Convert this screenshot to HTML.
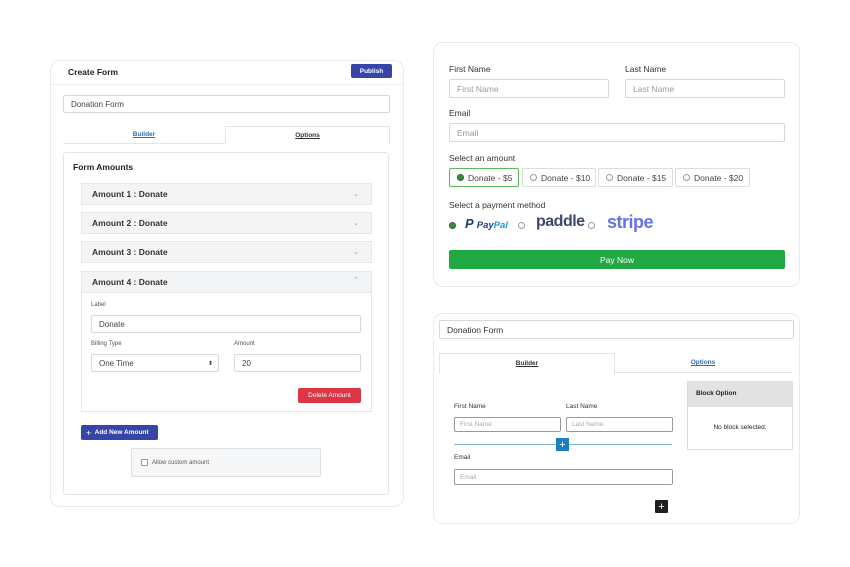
<!DOCTYPE html>
<html><head><meta charset="utf-8"><style>
*{box-sizing:border-box;margin:0;padding:0}
body{width:850px;height:567px;background:#fff;font-family:"Liberation Sans",Arial,sans-serif;position:relative;overflow:hidden;color:#222}
.a{position:absolute}
.card{position:absolute;border:1px solid #e8ecef;border-radius:10px;background:#fff}
.inp{position:absolute;border:1px solid #d6d9dc;border-radius:2px;background:#fff;font-size:8px;color:#444;padding-left:7px;display:flex;align-items:center}
.acc{position:absolute;left:81px;width:291px;height:22px;background:#f3f4f5;border:1px solid #e6e7e8;font-size:8.5px;font-weight:bold;color:#333;padding-left:10px;display:flex;align-items:center}
.acc span{position:absolute;right:12px;color:#8aa4c0;font-size:7px;font-weight:normal}
.sm{font-size:6px;color:#555}
.lbl{position:absolute;font-size:8.5px;color:#333}
.amt{position:absolute;top:168px;height:19px;border:1px solid #ddd;border-radius:2px;font-size:8.5px;color:#444;display:flex;align-items:center;padding-left:7px;gap:4px}
.rd{width:7px;height:7px;border:1px solid #999;border-radius:50%;display:inline-block}
.rdon{background:#3a8a3a;border-color:#2a6a2a}
.bi{position:absolute;border:1px solid #999;border-radius:2px;font-size:6.5px;color:#aaa;padding-left:5px;display:flex;align-items:center}
.btn{display:flex;align-items:center;justify-content:center}
</style></head><body>

<!-- Left card -->
<div class="card" style="left:50px;top:60px;width:354px;height:447px"></div>
<div class="a" style="left:68px;top:67px;font-size:8.5px;font-weight:bold;color:#222">Create Form</div>
<div class="a btn" style="left:351px;top:64px;width:41px;height:14px;background:#3545a8;border-radius:2px;color:#fff;font-size:6.5px;font-weight:bold">Publish</div>
<div class="a" style="left:51px;top:84px;width:352px;height:1px;background:#eceef0"></div>
<div class="inp" style="left:63px;top:95px;width:327px;height:18px">Donation Form</div>
<div class="a" style="left:63px;top:143px;width:162px;height:1px;background:#e3e5e7"></div>
<div class="a" style="left:63px;top:131px;width:162px;text-align:center;font-size:6.5px;font-weight:bold;color:#2a6fb0;text-decoration:underline">Builder</div>
<div class="a" style="left:225px;top:126px;width:165px;height:19px;border:1px solid #e3e5e7;border-bottom:none;background:#fff;text-align:center;font-size:6.5px;font-weight:bold;color:#333;text-decoration:underline;line-height:18px">Options</div>
<div class="a" style="left:63px;top:152px;width:326px;height:343px;border:1px solid #e3e5e7;border-radius:3px"></div>
<div class="a" style="left:73px;top:162px;font-size:8.5px;font-weight:bold;color:#222">Form Amounts</div>
<div class="acc" style="top:183px">Amount 1 : Donate<span>⌄</span></div>
<div class="acc" style="top:212px">Amount 2 : Donate<span>⌄</span></div>
<div class="acc" style="top:241px">Amount 3 : Donate<span>⌄</span></div>
<div class="acc" style="top:271px">Amount 4 : Donate<span style="top:4px">⌃</span></div>
<div class="a" style="left:81px;top:292px;width:291px;height:120px;border:1px solid #e6e7e8;border-top:none"></div>
<div class="a sm" style="left:91px;top:302px">Label</div>
<div class="inp" style="left:91px;top:315px;width:270px;height:18px">Donate</div>
<div class="a sm" style="left:91px;top:341px">Billing Type</div>
<div class="a sm" style="left:234px;top:341px">Amount</div>
<div class="inp" style="left:91px;top:354px;width:128px;height:18px">One Time<span style="position:absolute;right:5px;font-size:6px">⬍</span></div>
<div class="inp" style="left:234px;top:354px;width:127px;height:18px">20</div>
<div class="a btn" style="left:298px;top:388px;width:63px;height:15px;background:#dc3545;border-radius:2px;color:#fff;font-size:6.5px">Delete Amount</div>
<div class="a" style="left:81px;top:425px;width:77px;height:15px;background:#3545a8;border-radius:2px;color:#fff;font-size:6.5px;font-weight:bold;display:flex;align-items:center;padding-left:5px"><span style="font-size:9px;font-weight:normal">+</span>&nbsp; Add New Amount</div>
<div class="a" style="left:131px;top:448px;width:190px;height:29px;background:#f6f7f8;border:1px solid #dedfe0;border-radius:2px;font-size:6px;color:#555;display:flex;align-items:center;padding-left:9px"><span style="display:inline-block;width:7px;height:7px;border:1px solid #999;border-radius:1px;background:#fff;margin-right:4px"></span>Allow custom amount</div>

<!-- Right top card -->
<div class="card" style="left:433px;top:42px;width:367px;height:245px"></div>
<div class="lbl" style="left:449px;top:64px">First Name</div>
<div class="lbl" style="left:625px;top:64px">Last Name</div>
<div class="inp" style="left:449px;top:79px;width:160px;height:19px;color:#999;font-size:8.5px">First Name</div>
<div class="inp" style="left:625px;top:79px;width:160px;height:19px;color:#999;font-size:8.5px">Last Name</div>
<div class="lbl" style="left:449px;top:108px">Email</div>
<div class="inp" style="left:449px;top:123px;width:336px;height:19px;color:#999;font-size:8.5px">Email</div>
<div class="lbl" style="left:449px;top:153px">Select an amount</div>
<div class="amt" style="left:449px;width:70px;border-color:#5cb85c"><span class="rd rdon"></span>Donate - $5</div>
<div class="amt" style="left:522px;width:74px"><span class="rd"></span>Donate - $10</div>
<div class="amt" style="left:598px;width:75px"><span class="rd"></span>Donate - $15</div>
<div class="amt" style="left:675px;width:75px"><span class="rd"></span>Donate - $20</div>
<div class="lbl" style="left:449px;top:200px">Select a payment method</div>
<span class="a rd rdon" style="left:449px;top:222px"></span>
<div class="a" style="left:465px;top:216px;font-size:11px;font-weight:bold;font-style:italic;color:#253b80;white-space:nowrap"><span style="font-size:13px">P</span> <span style="font-size:9.5px">Pay</span><span style="font-size:9.5px;color:#179bd7">Pal</span></div>
<span class="a rd" style="left:518px;top:222px"></span>
<div class="a" style="left:536px;top:213px;font-size:16px;font-weight:bold;color:#3b4a6b;letter-spacing:-0.5px">paddle</div>
<span class="a rd" style="left:588px;top:222px"></span>
<div class="a" style="left:607px;top:212px;font-size:18px;font-weight:bold;color:#6772e5;letter-spacing:-0.5px">stripe</div>
<div class="a btn" style="left:449px;top:250px;width:336px;height:19px;background:#21a843;border-radius:2px;color:#fff;font-size:8.5px">Pay Now</div>

<!-- Right bottom card -->
<div class="card" style="left:433px;top:313px;width:367px;height:211px"></div>
<div class="inp" style="left:439px;top:320px;width:355px;height:19px;font-size:8.5px;color:#333">Donation Form</div>
<div class="a" style="left:614px;top:372px;width:178px;height:1px;background:#e3e5e7"></div>
<div class="a" style="left:439px;top:353px;width:176px;height:21px;border:1px solid #e3e5e7;border-bottom:none;background:#fff;text-align:center;font-size:6.5px;font-weight:bold;color:#333;text-decoration:underline;line-height:20px">Builder</div>
<div class="a" style="left:614px;top:359px;width:178px;text-align:center;font-size:6.5px;font-weight:bold;color:#2a6fb0;text-decoration:underline">Options</div>
<div class="a" style="left:687px;top:381px;width:106px;height:69px;border:1px solid #ddd"></div>
<div class="a" style="left:688px;top:382px;width:104px;height:25px;background:#e2e2e2;font-size:6.5px;font-weight:bold;color:#222;padding-left:8px;line-height:24px">Block Option</div>
<div class="a" style="left:688px;top:424px;width:104px;text-align:center;font-size:6.5px;color:#222">No block selected.</div>
<div class="a" style="left:454px;top:403px;font-size:6.5px;color:#333">First Name</div>
<div class="a" style="left:566px;top:403px;font-size:6.5px;color:#333">Last Name</div>
<div class="bi" style="left:454px;top:417px;width:107px;height:15px">First Name</div>
<div class="bi" style="left:566px;top:417px;width:107px;height:15px">Last Name</div>
<div class="a" style="left:454px;top:444px;width:218px;height:1px;background:#7fb6d9"></div>
<div class="a btn" style="left:556px;top:438px;width:13px;height:13px;background:#1a7fc1;color:#fff;font-size:11px">+</div>
<div class="a" style="left:454px;top:454px;font-size:6.5px;color:#333">Email</div>
<div class="bi" style="left:454px;top:469px;width:219px;height:16px">Email</div>
<div class="a btn" style="left:655px;top:500px;width:13px;height:13px;background:#1e1e1e;color:#fff;font-size:11px;border-radius:1px">+</div>
</body></html>
